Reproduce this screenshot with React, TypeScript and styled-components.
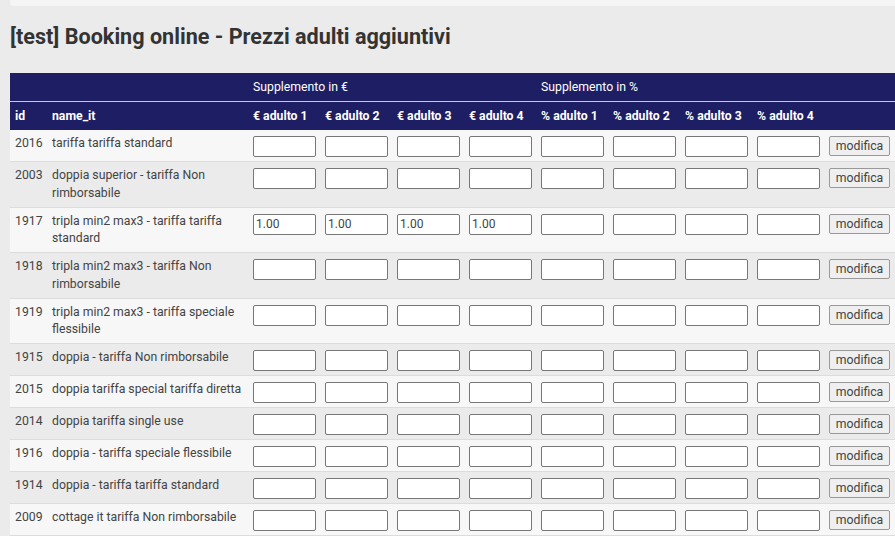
import React from "react";
import styled, { createGlobalStyle } from "styled-components";

const GlobalStyle = createGlobalStyle`
  html, body {
    margin: 0;
    padding: 0;
    background: #ebebeb;
    font-family: Roboto, "Noto Sans", Arial, sans-serif;
    color: #444;
    overflow: hidden;
  }
`;

const Page = styled.div`
  width: 895px;
  height: 536px;
  overflow: hidden;
`;

const TopBar = styled.div`
  height: 6px;
  margin-left: 10px;
  background: #f5f5f5;
  border-bottom-left-radius: 4px;
`;

const Title = styled.h1`
  margin: 17px 0 0 10px;
  height: 50px;
  font-size: 21.6px;
  line-height: 28px;
  font-weight: 700;
  color: #333;
`;

const Table = styled.table`
  margin-left: 10px;
  width: 885px;
  table-layout: fixed;
  border-collapse: collapse;
  font-size: 12.25px;
`;

const HeadCell = styled.th<{ $light?: boolean }>`
  background: #1e1e64;
  color: #fff;
  height: 28px;
  padding: 0 4px;
  text-align: left;
  font-weight: ${(p) => (p.$light ? 400 : 700)};
  white-space: nowrap;
  &:first-child {
    padding-left: 5px;
  }
`;

const GroupRow = styled.tr`
  border-bottom: 1px solid #c8c8d8;
`;

const Row = styled.tr<{ $odd: boolean }>`
  background: ${(p) => (p.$odd ? "#f7f7f7" : "#ebebeb")};
  border-bottom: 1px solid #dcdcdc;
`;

const Cell = styled.td`
  padding: 5px 4px 4px;
  vertical-align: top;
  line-height: 17.75px;
  color: #444;
  &:first-child {
    padding-left: 5px;
  }
`;

const Field = styled.input`
  box-sizing: border-box;
  width: 63px;
  height: 21px;
  margin: 1px 0 0;
  padding: 0 2px;
  border: 1px solid #777;
  border-radius: 2px;
  background: #fff;
  font-family: Roboto, Arial, sans-serif;
  font-size: 12px;
  color: #444;
  display: block;
`;

const EditButton = styled.button`
  box-sizing: border-box;
  width: 61px;
  height: 20px;
  margin: 1px 0 0;
  padding: 0;
  border: 1px solid #999;
  border-radius: 2px;
  background: #efefef;
  font-family: Roboto, Arial, sans-serif;
  font-size: 12.25px;
  color: #444;
  display: block;
`;

const rows = [
  { id: 2016, name: "tariffa tariffa standard" },
  { id: 2003, name: "doppia superior - tariffa Non rimborsabile" },
  { id: 1917, name: "tripla min2 max3 - tariffa tariffa standard", eur: "1.00" },
  { id: 1918, name: "tripla min2 max3 - tariffa Non rimborsabile" },
  { id: 1919, name: "tripla min2 max3 - tariffa speciale flessibile" },
  { id: 1915, name: "doppia - tariffa Non rimborsabile" },
  { id: 2015, name: "doppia tariffa special tariffa diretta" },
  { id: 2014, name: "doppia tariffa single use" },
  { id: 1916, name: "doppia - tariffa speciale flessibile" },
  { id: 1914, name: "doppia - tariffa tariffa standard" },
  { id: 2009, name: "cottage it tariffa Non rimborsabile" },
];

const adults = [1, 2, 3, 4];

export default function App() {
  return (
    <Page>
      <GlobalStyle />
      <TopBar />
      <Title>[test] Booking online - Prezzi adulti aggiuntivi</Title>
      <Table>
        <colgroup>
          <col style={{ width: 38 }} />
          <col style={{ width: 201 }} />
          {[...adults, ...adults].map((_, i) => (
            <col key={i} style={{ width: 72 }} />
          ))}
          <col style={{ width: 70 }} />
        </colgroup>
        <thead>
          <GroupRow>
            <HeadCell />
            <HeadCell />
            <HeadCell $light colSpan={4}>
              Supplemento in €
            </HeadCell>
            <HeadCell $light colSpan={4}>
              Supplemento in %
            </HeadCell>
            <HeadCell />
          </GroupRow>
          <tr>
            <HeadCell>id</HeadCell>
            <HeadCell>name_it</HeadCell>
            {adults.map((n) => (
              <HeadCell key={`e${n}`}>€ adulto {n}</HeadCell>
            ))}
            {adults.map((n) => (
              <HeadCell key={`p${n}`}>% adulto {n}</HeadCell>
            ))}
            <HeadCell />
          </tr>
        </thead>
        <tbody>
          {rows.map((r, i) => (
            <Row key={r.id} $odd={i % 2 === 0}>
              <Cell>{r.id}</Cell>
              <Cell>{r.name}</Cell>
              {adults.map((n) => (
                <Cell key={`e${n}`}>
                  <Field defaultValue={r.eur ?? ""} />
                </Cell>
              ))}
              {adults.map((n) => (
                <Cell key={`p${n}`}>
                  <Field defaultValue="" />
                </Cell>
              ))}
              <Cell>
                <EditButton>modifica</EditButton>
              </Cell>
            </Row>
          ))}
        </tbody>
      </Table>
    </Page>
  );
}
